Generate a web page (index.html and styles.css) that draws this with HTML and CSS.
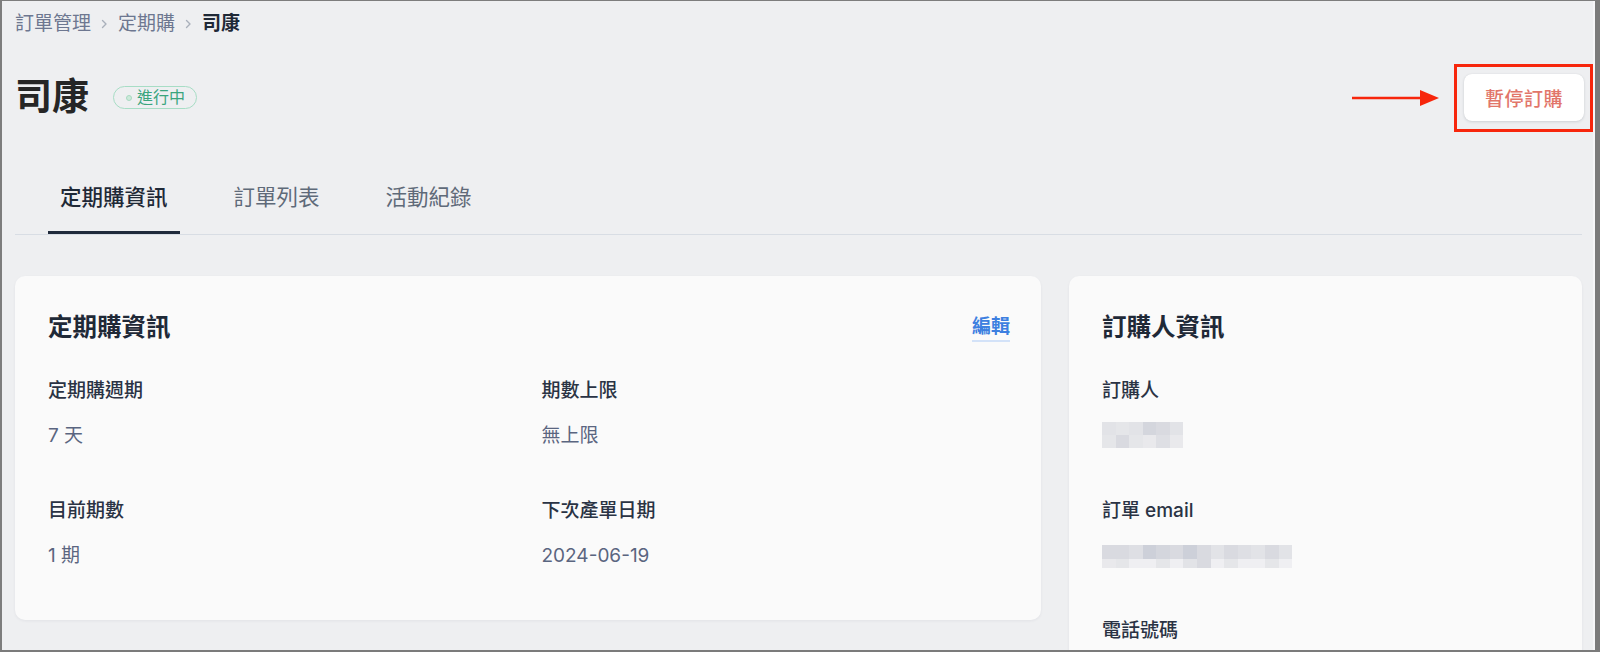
FILE: index.html
```html
<!DOCTYPE html>
<html lang="zh-Hant">
<head>
<meta charset="utf-8">
<title>司康</title>
<link rel="stylesheet" href="styles.css">
</head>
<body>
<div class="frame">
  <div class="page">
    <nav class="crumbs">
      <span class="crumb">訂單管理</span>
      <svg class="chev" width="7" height="12" viewBox="0 0 7 12"><polyline points="1.5,2.5 5,6 1.5,9.5" fill="none" stroke="#a9b0bb" stroke-width="1.4" stroke-linecap="round" stroke-linejoin="round"/></svg>
      <span class="crumb">定期購</span>
      <svg class="chev" width="7" height="12" viewBox="0 0 7 12"><polyline points="1.5,2.5 5,6 1.5,9.5" fill="none" stroke="#a9b0bb" stroke-width="1.4" stroke-linecap="round" stroke-linejoin="round"/></svg>
      <span class="crumb current">司康</span>
    </nav>

    <header class="head">
      <div class="head-left">
        <h1 class="title">司康</h1>
        <span class="badge"><span class="dot"></span>進行中</span>
      </div>
      <div class="action">
        <svg class="arrow" width="90" height="18" viewBox="0 0 90 18"><line x1="0" y1="9" x2="72" y2="9" stroke="#f7260c" stroke-width="2.5"/><polygon points="68,1 87,9 68,17" fill="#f7260c"/></svg>
        <span class="highlight"></span>
        <button class="btn">暫停訂購</button>
      </div>
    </header>

    <div class="tabs">
      <span class="tab active">定期購資訊</span>
      <span class="tab">訂單列表</span>
      <span class="tab">活動紀錄</span>
    </div>

    <div class="cards">
      <section class="card">
        <div class="card-head">
          <h2 class="card-title">定期購資訊</h2>
          <a class="edit">編輯</a>
        </div>
        <div class="fields">
          <div class="field">
            <div class="label">定期購週期</div>
            <div class="value">7 天</div>
          </div>
          <div class="field">
            <div class="label">期數上限</div>
            <div class="value">無上限</div>
          </div>
          <div class="field">
            <div class="label">目前期數</div>
            <div class="value">1 期</div>
          </div>
          <div class="field">
            <div class="label">下次產單日期</div>
            <div class="value">2024-06-19</div>
          </div>
        </div>
      </section>

      <section class="card side">
        <div class="card-head">
          <h2 class="card-title">訂購人資訊</h2>
        </div>
        <div class="side-fields">
          <div class="field">
            <div class="label">訂購人</div>
            <div class="mosaic name">
              <div class="mrow top">
                <i class="s3"></i><i class="s2"></i><i class="s3"></i><i class="s6"></i><i class="s5"></i><i class="s3"></i>
              </div>
              <div class="mrow">
                <i class="s2"></i><i class="s5"></i><i class="s2"></i><i class="s1"></i><i class="s4"></i><i class="s1"></i>
              </div>
            </div>
          </div>
          <div class="field">
            <div class="label">訂單 email</div>
            <div class="mosaic email">
              <div class="mrow top">
                <i class="s5"></i><i class="s5"></i><i class="s4"></i><i class="s7"></i><i class="s6"></i><i class="s5"></i><i class="s7"></i><i class="s5"></i><i class="s3"></i><i class="s5"></i><i class="s4"></i><i class="s3"></i><i class="s5"></i><i class="s3"></i>
              </div>
              <div class="mrow low">
                <i class="s1"></i><i class="s2"></i><i class="s0"></i><i class="s0"></i><i class="s2"></i><i class="s0"></i><i class="s3"></i><i class="s5"></i><i class="s0"></i><i class="s2"></i><i class="s0"></i><i class="s0"></i><i class="s2"></i><i class="s0"></i>
              </div>
            </div>
          </div>
          <div class="field">
            <div class="label">電話號碼</div>
            <div class="value">&nbsp;</div>
          </div>
        </div>
      </section>
    </div>
  </div>
</div>
</body>
</html>
```

FILE: styles.css
```css
* { box-sizing: border-box; }

html, body {
  margin: 0;
  padding: 0;
  background: #7b7b7b;
}

body {
  font-family: "Inter", "Noto Sans CJK TC", "Noto Sans", sans-serif;
  color: #1f2937;
}

.frame {
  width: 1600px;
  height: 652px;
  border-top: 1px solid #7d7d7d;
  border-left: 2px solid #7d7d7d;
  border-right: 5px solid #7b7b7b;
  border-bottom: 2px solid #7b7b7b;
  overflow: hidden;
}

.page {
  height: 100%;
  background: #eeeff1;
  padding: 0 13px 0 13px;
  overflow: hidden;
  box-shadow: inset -2px 0 0 #f6f6f8;
}

/* breadcrumb */
.crumbs {
  display: flex;
  align-items: center;
  gap: 10px;
  margin-top: 9px;
  height: 28px;
  font-size: 19px;
  line-height: 28px;
}
.crumb { color: #6d7790; }
.crumb.current { color: #1f2937; font-weight: 700; }
.chev { display: block; }

/* header */
.head {
  display: flex;
  align-items: center;
  justify-content: space-between;
  margin-top: 35px;
  height: 48px;
}
.head-left {
  display: flex;
  align-items: center;
  gap: 22px;
}
.title {
  margin: 0;
  font-size: 37px;
  line-height: 48px;
  font-weight: 700;
  color: #262626;
}
.badge {
  display: inline-flex;
  align-items: center;
  gap: 5px;
  height: 23px;
  padding: 0 11px 0 12px;
  border: 1px solid #a7ddc5;
  border-radius: 12px;
  font-size: 16px;
  line-height: 21px;
  color: #3aa57e;
  margin-top: 1px;
  margin-left: 2px;
}
.dot {
  width: 6px;
  height: 6px;
  border-radius: 50%;
  background: #cdeadb;
  border: 1px solid #a8d9c1;
}

.action {
  position: relative;
  margin-right: -2px;
}
.btn {
  display: block;
  width: 120px;
  height: 47px;
  border: none;
  border-radius: 8px;
  background: #ffffff;
  box-shadow: 0 1px 3px rgba(30, 40, 60, 0.14), 0 0 1px rgba(30, 40, 60, 0.1);
  font-family: inherit;
  font-size: 19px;
  font-weight: 500;
  color: #e2766a;
  letter-spacing: 0.5px;
}
.highlight {
  position: absolute;
  left: -10px;
  right: -9px;
  top: -10px;
  bottom: -11px;
  border: 3px solid #f7260c;
}
.arrow {
  position: absolute;
  left: -112px;
  top: 15px;
}

/* tabs */
.tabs {
  display: flex;
  gap: 42px;
  margin-top: 61px;
  border-bottom: 1px solid #d8dde4;
  padding-left: 33px;
}
.tab {
  display: block;
  padding: 0 12px 19px;
  font-size: 21.5px;
  line-height: 30px;
  color: #5f6a79;
  border-bottom: 3px solid transparent;
}
.tab.active {
  color: #1f2937;
  font-weight: 500;
  border-bottom-color: #1f2a3b;
}

/* cards */
.cards {
  display: grid;
  grid-template-columns: 2fr 1fr;
  gap: 28px;
  margin-top: 41px;
  align-items: start;
}
.card {
  background: #fafafa;
  border-radius: 10px;
  box-shadow: 0 1px 3px rgba(30, 40, 60, 0.06);
  padding: 35px 32px 50px 33px;
}
.card.side {
  padding-right: 32px;
  padding-bottom: 80px;
}
.card-head {
  display: flex;
  align-items: center;
  justify-content: space-between;
  height: 32px;
}
.card-title {
  margin: 0;
  font-size: 24.5px;
  line-height: 32px;
  font-weight: 700;
  color: #1f2937;
}
.edit {
  font-size: 19px;
  line-height: 26px;
  font-weight: 600;
  color: #3d7fe0;
  border-bottom: 2px solid #d3e2f8;
  padding-top: 2px;
  margin-right: -1px;
}

.fields {
  display: grid;
  grid-template-columns: 1fr 1fr;
  column-gap: 26px;
  row-gap: 47px;
  margin-top: 34px;
}
.side-fields {
  display: flex;
  flex-direction: column;
  gap: 47px;
  margin-top: 34px;
}
.field {
  display: flex;
  flex-direction: column;
  gap: 17px;
}
.label {
  font-size: 19px;
  line-height: 28px;
  font-weight: 500;
  color: #2a3344;
}
.value {
  font-size: 19px;
  line-height: 28px;
  color: #5a6580;
}

/* pixelated (redacted) values */
.mosaic {
  display: flex;
  flex-direction: column;
  margin: 0 0 2px;
}
.mosaic.name { width: 81px; }
.mosaic.email { width: 190px; margin-top: 3px; }
.mrow { display: flex; height: 13px; }
.mosaic.email .mrow.top { height: 14px; }
.mosaic.email .mrow.low { height: 9px; }
.mrow i { flex: 1; display: block; }
.s0 { background: #efeff2; }
.s1 { background: #e9e9ec; }
.s2 { background: #e5e6e9; }
.s3 { background: #e2e3e7; }
.s4 { background: #dedfe4; }
.s5 { background: #d9dae0; }
.s6 { background: #d4d6dd; }
.s7 { background: #cdd0d9; }
```
